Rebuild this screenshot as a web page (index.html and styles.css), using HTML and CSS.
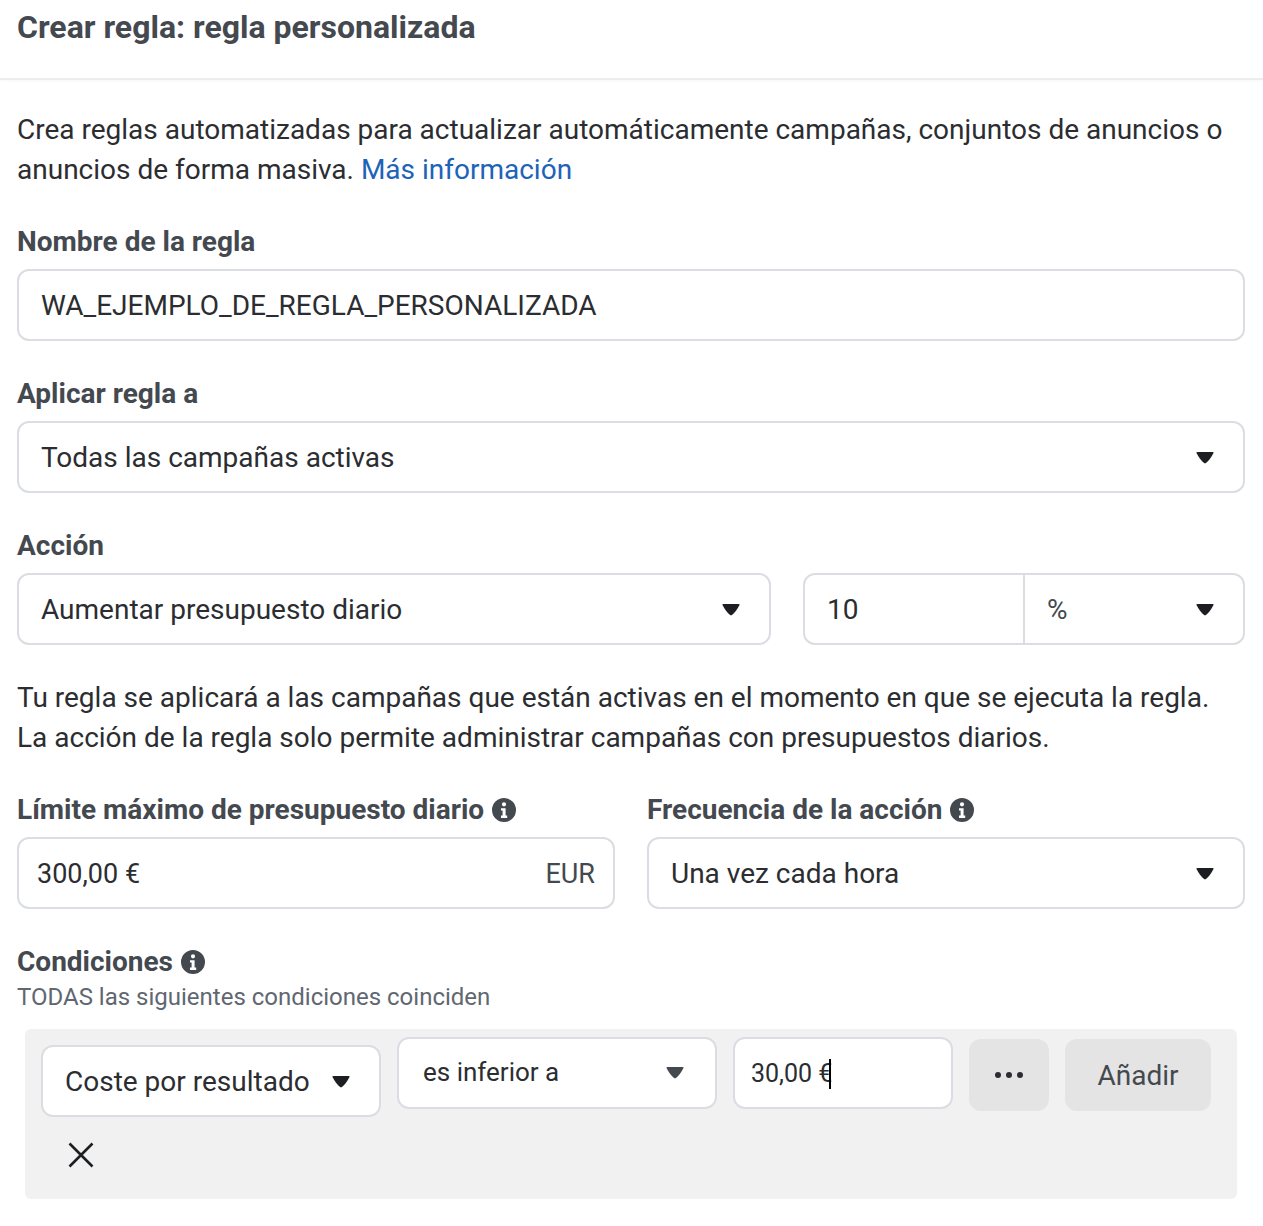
FILE: index.html
```html
<!DOCTYPE html>
<html lang="es">
<head>
    <meta charset="UTF-8">
    <meta name="viewport" content="width=device-width, initial-scale=1.0">
    <title>Crear regla</title>
    <link rel="stylesheet" href="styles.css">
</head>
<body>

    <svg class="defs">
        <defs>
            <symbol id="caret" viewBox="0 0 20 14">
                <path d="M1.5 2 Q1 1 2.5 1 H17.5 Q19 1 18.5 2 L16.5 5.5 Q13 11 10 12.5 Q7 11 3.5 5.5 Z"/>
            </symbol>
            <symbol id="info" viewBox="0 0 24 24">
                <path fill-rule="evenodd" d="M12 0a12 12 0 1 0 0 24 12 12 0 0 0 0-24zm0 4.2a2.1 2.1 0 1 1 0 4.2 2.1 2.1 0 0 1 0-4.2zM9 10.2h4.6v7.4H15.2v2.4H9v-2.4h1.6v-5H9z"/>
            </symbol>
        </defs>
    </svg>

    <header class="top">
        <h1>Crear regla: regla personalizada</h1>
    </header>

    <main class="content">
        <p class="text">Crea reglas automatizadas para actualizar automáticamente campañas, conjuntos de anuncios o anuncios de forma masiva. <a href="#">Más información</a></p>

        <div class="field">
            <label class="label">Nombre de la regla</label>
            <div class="box">WA_EJEMPLO_DE_REGLA_PERSONALIZADA</div>
        </div>

        <div class="field">
            <label class="label">Aplicar regla a</label>
            <div class="box select">
                <span>Todas las campañas activas</span>
                <svg class="caret"><use href="#caret"/></svg>
            </div>
        </div>

        <div class="field">
            <label class="label">Acción</label>
            <div class="row-action">
                <div class="box select">
                    <span>Aumentar presupuesto diario</span>
                    <svg class="caret"><use href="#caret"/></svg>
                </div>
                <div class="box split">
                    <div class="split-value">10</div>
                    <div class="split-unit">
                        <span>%</span>
                        <svg class="caret"><use href="#caret"/></svg>
                    </div>
                </div>
            </div>
        </div>

        <p class="text note">Tu regla se aplicará a las campañas que están activas en el momento en que se ejecuta la regla. La acción de la regla solo permite administrar campañas con presupuestos diarios.</p>

        <div class="row-limit">
            <div class="field-col">
                <label class="label">Límite máximo de presupuesto diario <svg class="info"><use href="#info"/></svg></label>
                <div class="box money">
                    <span>300,00 €</span>
                    <span class="currency">EUR</span>
                </div>
            </div>
            <div class="field-col">
                <label class="label">Frecuencia de la acción <svg class="info"><use href="#info"/></svg></label>
                <div class="box select">
                    <span>Una vez cada hora</span>
                    <svg class="caret"><use href="#caret"/></svg>
                </div>
            </div>
        </div>

        <div class="field conditions">
            <label class="label">Condiciones <svg class="info"><use href="#info"/></svg></label>
            <div class="hint">TODAS las siguientes condiciones coinciden</div>
            <div class="panel">
                <div class="cond-row">
                    <div class="box select cond-metric">
                        <span>Coste por resultado</span>
                        <svg class="caret"><use href="#caret"/></svg>
                    </div>
                    <div class="box select cond-op">
                        <span>es inferior a</span>
                        <svg class="caret dark"><use href="#caret"/></svg>
                    </div>
                    <div class="box cond-value"><span>30,00 €</span><i class="cursor"></i></div>
                    <button class="btn btn-more">
                        <svg class="dots" viewBox="0 0 28 8"><circle cx="3" cy="4" r="3"/><circle cx="14" cy="4" r="3"/><circle cx="25" cy="4" r="3"/></svg>
                    </button>
                    <button class="btn btn-add">Añadir</button>
                </div>
                <svg class="remove" viewBox="0 0 26 26"><path d="M1.5 1.5 L24.5 24.5 M24.5 1.5 L1.5 24.5"/></svg>
            </div>
        </div>
    </main>

</body>
</html>
```

FILE: styles.css
```css
* {
    box-sizing: border-box;
}
body {
    margin: 0;
    background-color: #fff;
    color: #2b2d31;
    font-family: Roboto, "Liberation Sans", sans-serif;
    font-size: 28px;
    line-height: 40px;
}
.defs {
    display: none;
}
.top {
    height: 80px;
    padding: 7px 18px 0 17px;
    border-bottom: 2px solid #eceded;
    box-shadow: 0 1px 3px rgba(0, 0, 0, 0.03);
}
h1 {
    margin: 0;
    font-size: 32px;
    line-height: 40px;
    font-weight: 700;
    color: #444950;
}
.content {
    padding: 30px 18px 0 17px;
}
.text {
    margin: 0;
}
.text a {
    color: #1d63b8;
    text-decoration: none;
}
.note {
    margin-top: 33px;
}
.field {
    margin-top: 33px;
}
.field:first-of-type {
    margin-top: 32px;
}
.label {
    display: flex;
    align-items: center;
    gap: 8px;
    height: 40px;
    margin-bottom: 7px;
    font-size: 28px;
    font-weight: 700;
    color: #444950;
}
.box {
    display: flex;
    align-items: center;
    height: 72px;
    padding: 2px 22px 0;
    background-color: #fff;
    border: 2px solid #dadde1;
    border-radius: 12px;
}
.select {
    justify-content: space-between;
    padding-right: 28px;
}
.caret {
    width: 20px;
    height: 14px;
    flex: none;
    fill: #1c1e21;
}
.caret.dark {
    fill: #444950;
}
.info {
    width: 24px;
    height: 24px;
    fill: #444950;
}
.row-action {
    display: grid;
    grid-template-columns: 754px 442px;
    gap: 32px;
}
.split {
    padding: 0;
}
.split-value {
    flex: none;
    width: 218px;
    padding: 2px 0 0 22px;
}
.split-unit {
    display: flex;
    flex: 1;
    align-items: center;
    justify-content: space-between;
    height: 100%;
    padding: 2px 28px 0 22px;
    border-left: 2px solid #dadde1;
    color: #444950;
}
.row-limit {
    display: grid;
    grid-template-columns: 598px 598px;
    gap: 32px;
    margin-top: 32px;
}
.money {
    justify-content: space-between;
    padding: 2px 18px 0;
    font-size: 27px;
}
.currency {
    color: #444950;
}
.hint {
    margin-top: -8px;
    font-size: 24px;
    line-height: 32px;
    color: #606770;
}
.panel {
    width: 1212px;
    height: 170px;
    margin: 16px 0 0 8px;
    padding: 8px 16px;
    background-color: #f1f1f1;
    border-radius: 6px;
}
.cond-row {
    display: flex;
    align-items: flex-start;
    gap: 16px;
}
.cond-metric {
    width: 340px;
    margin-top: 8px;
}
.cond-op {
    width: 320px;
    padding: 2px 30px 0 24px;
    font-size: 26px;
}
.cond-op span {
    margin-top: -4px;
}
.cond-op .caret {
    margin-top: -2px;
}
.cond-value {
    width: 220px;
    padding: 2px 16px 0;
    font-size: 25px;
}
.cursor {
    width: 2px;
    height: 30px;
    margin-left: -3px;
    background-color: #000;
}
.btn {
    display: flex;
    align-items: center;
    justify-content: center;
    height: 72px;
    margin-top: 2px;
    border: none;
    border-radius: 12px;
    background-color: #e4e4e4;
    color: #444950;
    font-family: Roboto, "Liberation Sans", sans-serif;
}
.btn-more {
    width: 80px;
}
.dots {
    width: 28px;
    height: 8px;
    fill: #2b2d31;
}
.btn-add {
    width: 146px;
    font-size: 28px;
}
.remove {
    display: block;
    width: 26px;
    height: 26px;
    margin: 25px 0 0 27px;
    fill: none;
    stroke: #1c1e21;
    stroke-width: 2.6;
}
```
